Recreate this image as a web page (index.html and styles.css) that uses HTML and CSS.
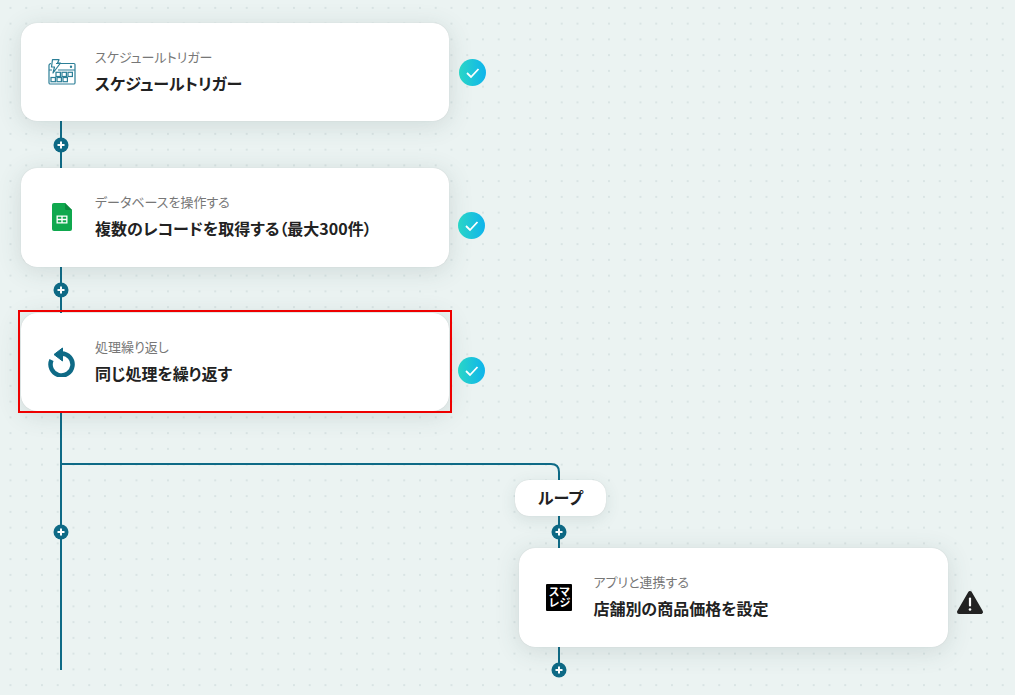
FILE: index.html
```html
<!DOCTYPE html>
<html lang="ja">
<head>
  <meta charset="UTF-8">
  <title>フローボット</title>
  <link rel="stylesheet" href="styles.css">
</head>
<body>
  <main class="canvas">

    <!-- connectors -->
    <svg class="wires" width="1015" height="695" viewBox="0 0 1015 695">
      <path class="wire" d="M61 120V670"/>
      <path class="wire" d="M61 464H551Q559 464 559 472V548"/>
      <path class="wire" d="M559 646V670"/>
      <g class="plus"><circle cx="61" cy="145" r="7.5"/><path d="M57.5 145h7M61 141.5v7"/></g>
      <g class="plus"><circle cx="61" cy="290" r="7.5"/><path d="M57.5 290h7M61 286.5v7"/></g>
      <g class="plus"><circle cx="61" cy="532" r="7.5"/><path d="M57.5 532h7M61 528.5v7"/></g>
      <g class="plus"><circle cx="559" cy="532" r="7.5"/><path d="M555.5 532h7M559 528.5v7"/></g>
      <g class="plus"><circle cx="559" cy="670" r="7.5"/><path d="M555.5 670h7M559 666.5v7"/></g>
    </svg>

    <section class="node node-trigger">
      <div class="node-icon">
        <svg width="28" height="26" viewBox="0 0 28 26" fill="none" stroke="#2c7f97" stroke-width="1.2">
          <path d="M8 4.500H26a1 1 0 0 1 1 1V24a1.200 1.200 0 0 1-1.200 1H2.200A1.200 1.200 0 0 1 1 24V6.500a2 2 0 0 1 2-2"/>
          <path d="M1 11H4M10 11H27"/>
          <path d="M4.500 .7H11L9.500 4H12.500L5 14L6.500 8H3.500Z" stroke-linejoin="round"/>
          <circle cx="23" cy="7.800" r=".6" fill="#2c7f97"/>
          <rect x="8" y="13.300" width="4.400" height="4.200"/><rect x="14" y="13.300" width="4.400" height="4.200"/><rect x="20" y="13.300" width="4.400" height="4.200"/>
          <rect x="3" y="18.500" width="4.400" height="4.200"/><rect x="9" y="18.500" width="4.400" height="4.200"/><rect x="15" y="18.500" width="4.400" height="4.200"/>
        </svg>
      </div>
      <div class="node-text">
        <p class="node-kind">スケジュールトリガー</p>
        <h2 class="node-title">スケジュールトリガー</h2>
      </div>
    </section>
    <svg class="status status-1" width="27" height="27" viewBox="0 0 27 27"><defs><linearGradient id="ok1"><stop offset="0" stop-color="#2ad6c6"/><stop offset="1" stop-color="#0fb4ec"/></linearGradient></defs><circle cx="13.500" cy="13.500" r="13.500" fill="url(#ok1)"/><path d="M8 14l4 4 7.500-8" fill="none" stroke="#fff" stroke-width="1.800"/></svg>

    <section class="node node-sheet">
      <div class="node-icon">
        <svg width="20" height="28" viewBox="0 0 20 28">
          <path d="M2 0H13L20 7V26a2 2 0 0 1-2 2H2a2 2 0 0 1-2-2V2a2 2 0 0 1 2-2Z" fill="#0fa84e"/>
          <path d="M13 0L20 7H14.500A1.500 1.500 0 0 1 13 5.500Z" fill="#0b8a3e"/>
          <path d="M4.500 12.500H15.500V20.500H4.500ZM5.800 13.800V15.800H9.300V13.800ZM10.700 13.800V15.800H14.200V13.800ZM5.800 17.200V19.200H9.300V17.200ZM10.700 17.200V19.200H14.200V17.200Z" fill="#fff" fill-rule="evenodd"/>
        </svg>
      </div>
      <div class="node-text">
        <p class="node-kind">データベースを操作する</p>
        <h2 class="node-title">複数のレコードを取得する（最大300件）</h2>
      </div>
    </section>
    <svg class="status status-2" width="27" height="27" viewBox="0 0 27 27"><circle cx="13.500" cy="13.500" r="13.500" fill="url(#ok1)"/><path d="M8 14l4 4 7.500-8" fill="none" stroke="#fff" stroke-width="1.800"/></svg>

    <section class="node node-loop is-selected">
      <div class="node-icon">
        <svg width="27" height="30" viewBox="0 0 27 30" fill="none">
          <path d="M3.500 13A11 11 0 1 0 13.500 6.500" stroke="#0e6a86" stroke-width="4.500"/>
          <path d="M14.500 1V14L6 7.500Z" fill="#0e6a86" stroke="#0e6a86" stroke-width="1" stroke-linejoin="round"/>
        </svg>
      </div>
      <div class="node-text">
        <p class="node-kind">処理繰り返し</p>
        <h2 class="node-title">同じ処理を繰り返す</h2>
      </div>
    </section>
    <svg class="status status-3" width="27" height="27" viewBox="0 0 27 27"><circle cx="13.500" cy="13.500" r="13.500" fill="url(#ok1)"/><path d="M8 14l4 4 7.500-8" fill="none" stroke="#fff" stroke-width="1.800"/></svg>

    <div class="loop-label">ループ</div>

    <section class="node node-app">
      <div class="node-icon">
        <div class="smaregi">スマレジ</div>
      </div>
      <div class="node-text">
        <p class="node-kind">アプリと連携する</p>
        <h2 class="node-title">店舗別の商品価格を設定</h2>
      </div>
    </section>
    <svg class="status status-warn" width="28" height="25" viewBox="0 0 28 25">
      <path d="M14 3L25 22H3Z" fill="#222" stroke="#222" stroke-width="4" stroke-linejoin="round"/>
      <path d="M14 8.500V15.500" stroke="#fff" stroke-width="2.200" stroke-linecap="round"/>
      <circle cx="14" cy="19.500" r="1.300" fill="#fff"/>
    </svg>

  </main>
</body>
</html>
```

FILE: styles.css
```css
html, body {
  margin: 0;
  padding: 0;
}

body {
  font-family: "Noto Sans CJK JP", "Noto Sans", sans-serif;
  font-feature-settings: "palt";
  color: #222;
  overflow: hidden;
}

.canvas {
  position: relative;
  width: 1015px;
  height: 695px;
  overflow: hidden;
  background-color: #ebf3f2;
  background-image: radial-gradient(circle at center, #d9e4e4 1px, transparent 1.3px);
  background-size: 15.75px 15.75px;
  background-position: 2.6px 0;
}

.wires {
  position: absolute;
  left: 0;
  top: 0;
}

.wire {
  fill: none;
  stroke: #0e6a86;
  stroke-width: 2;
}

.plus circle {
  fill: #0e6a86;
}

.plus path {
  fill: none;
  stroke: #fff;
  stroke-width: 2;
}

/* nodes sit on a free canvas */
.node {
  position: absolute;
  display: flex;
  align-items: center;
  box-sizing: border-box;
  width: 428px;
  height: 98.5px;
  padding-left: 7px;
  background: #fff;
  border-radius: 16px;
  box-shadow: 0 0 1px rgba(0, 0, 0, .15), 0 4px 24px rgba(60, 90, 90, .16);
}

.node-trigger { left: 21px; top: 22.8px; }
.node-sheet { left: 21px; top: 168px; }
.node-loop { left: 21px; top: 312.8px; }
.node-app { left: 519.4px; top: 548px; width: 428.4px; }

.is-selected::after {
  content: "";
  position: absolute;
  left: -3px;
  right: -3px;
  top: -3px;
  bottom: -2px;
  border: 2px solid #ee0000;
  pointer-events: none;
}

.node-icon {
  display: flex;
  align-items: center;
  justify-content: center;
  width: 67px;
  flex: none;
}

.node-text {
  min-width: 0;
  margin-top: -3px;
}

.node-kind {
  margin: 0 0 6px;
  font-size: 13px;
  line-height: 18px;
  font-weight: 400;
  color: #777;
}

.node-title {
  margin: 0;
  font-size: 16px;
  line-height: 22px;
  font-weight: 700;
  color: #222;
}

.smaregi {
  box-sizing: border-box;
  width: 26px;
  height: 27px;
  margin-right: 1px;
  padding: 2px 0 0 2px;
  background: #000;
  color: #fff;
  border-radius: 1px;
  font-size: 11px;
  line-height: 11px;
  font-weight: 700;
  font-feature-settings: normal;
}

.loop-label {
  position: absolute;
  left: 515px;
  top: 480px;
  width: 91px;
  height: 36px;
  padding-bottom: 2px;
  box-sizing: border-box;
  display: flex;
  align-items: center;
  justify-content: center;
  background: #fff;
  border-radius: 14px;
  font-size: 16px;
  font-weight: 700;
  box-shadow: 0 0 1px rgba(0, 0, 0, .15), 0 4px 16px rgba(60, 90, 90, .12);
}

.status {
  position: absolute;
}

.status-1 { left: 459px; top: 59px; }
.status-2 { left: 458px; top: 212px; }
.status-3 { left: 458px; top: 357px; }
.status-warn { left: 956px; top: 590px; }
```
